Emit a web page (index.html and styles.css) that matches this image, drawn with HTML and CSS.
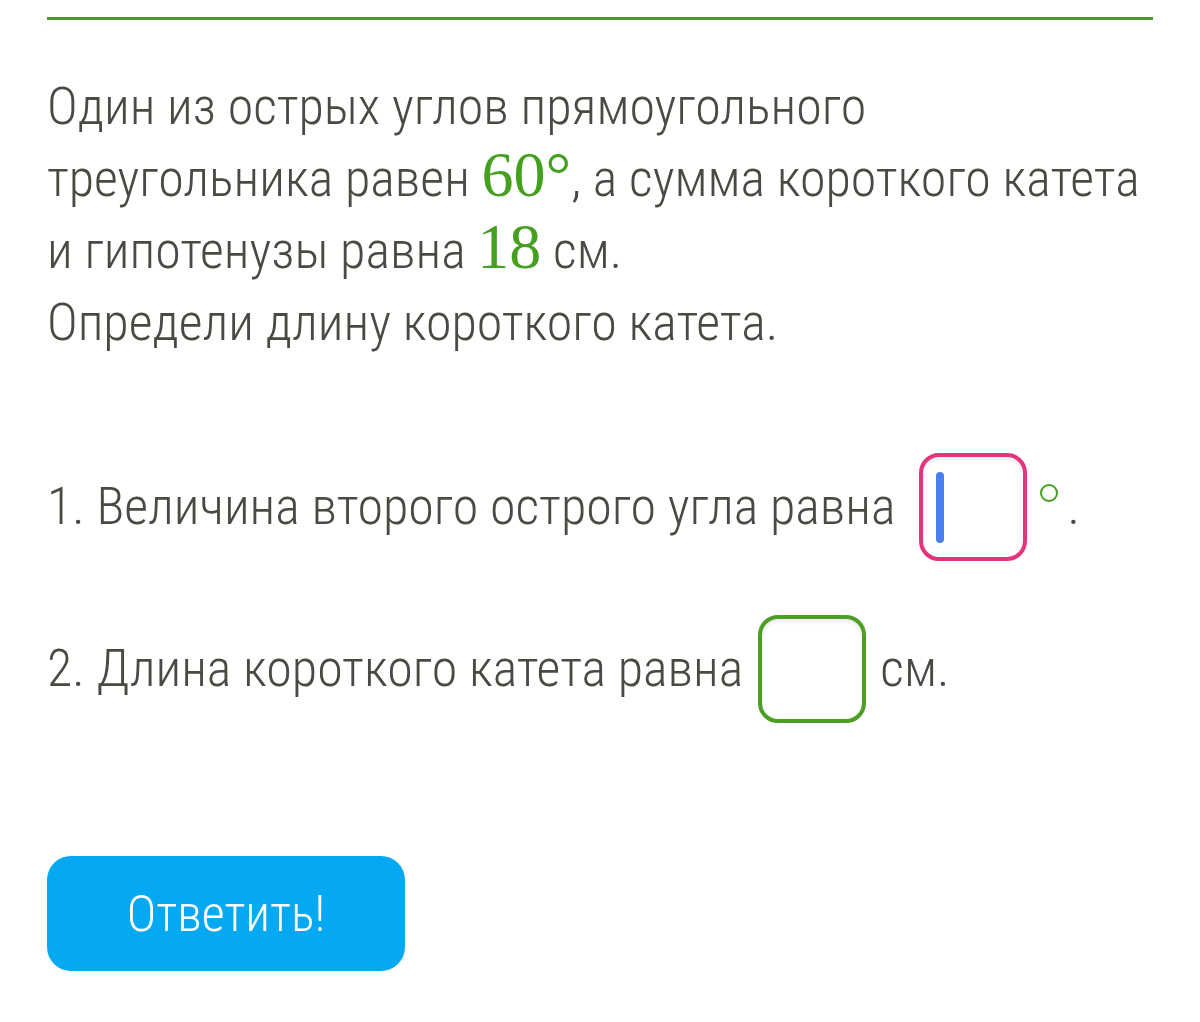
FILE: index.html
```html
<!DOCTYPE html>
<html>
<head>
    <title>Задача</title>
    <link rel="stylesheet" href="styles.css">
</head>
<body>
    <div class="page">
        <div class="rule"></div>

        <p class="task">
            Один из острых углов прямоугольного<br>
            треугольника равен <span class="num">60&deg;</span>, а сумма короткого катета<br>
            и гипотенузы равна <span class="num">18</span> см.<br>
            Определи длину короткого катета.
        </p>

        <div class="item item-first">
            <span>1. Величина второго острого угла равна</span>
            <span class="box box-active"><span class="cursor"></span></span>
            <span class="deg"></span><span>.</span>
        </div>

        <div class="item item-second">
            <span>2. Длина короткого катета равна</span>
            <span class="box box-ok"></span>
            <span>см.</span>
        </div>

        <button class="answer">Ответить!</button>
    </div>
</body>
</html>
```

FILE: styles.css
```css
body { margin: 0; background: #fff; color: #4a4a44; font-family: "Roboto Condensed Light", "Roboto Condensed", Roboto, sans-serif; font-weight: 300; }
.page { padding: 17px 47px 0; }
.rule { height: 3px; background: #4b9b2b; }
.task { margin: 51px 0 0; font-size: 52px; line-height: 72px; }
.num { font-family: "Liberation Serif", serif; font-size: 64px; line-height: 0; color: #46a020; font-weight: 400; }
.item { display: flex; align-items: center; font-size: 52px; line-height: 72px; }
.item-first { margin-top: 94px; }
.item-second { margin-top: 54px; }
.box { box-sizing: border-box; width: 108px; height: 108px; border: 4px solid; border-radius: 20px; box-shadow: inset 0 3px 4px rgba(0,0,0,0.08); padding: 15px 0 0 13px; }
.box-active { border-color: #e3347d; margin: 0 13px 0 24px; }
.box-ok { border-color: #4c9e24; margin: 0 14px 0 15px; }
.cursor { display: block; width: 8px; height: 71px; border-radius: 4px; background: #4a7ff0; }
.deg { align-self: flex-start; box-sizing: border-box; width: 18px; height: 18px; margin: 31px 9px 0 0; border: 2.5px solid #46a020; border-radius: 50%; }
.answer { margin-top: 133px; width: 358px; height: 115px; border: none; border-radius: 24px; background: #05a9f2; color: #fff; font-family: "Roboto Condensed Light", "Roboto Condensed", Roboto, sans-serif; font-weight: 300; font-size: 50px; cursor: pointer; }
```
